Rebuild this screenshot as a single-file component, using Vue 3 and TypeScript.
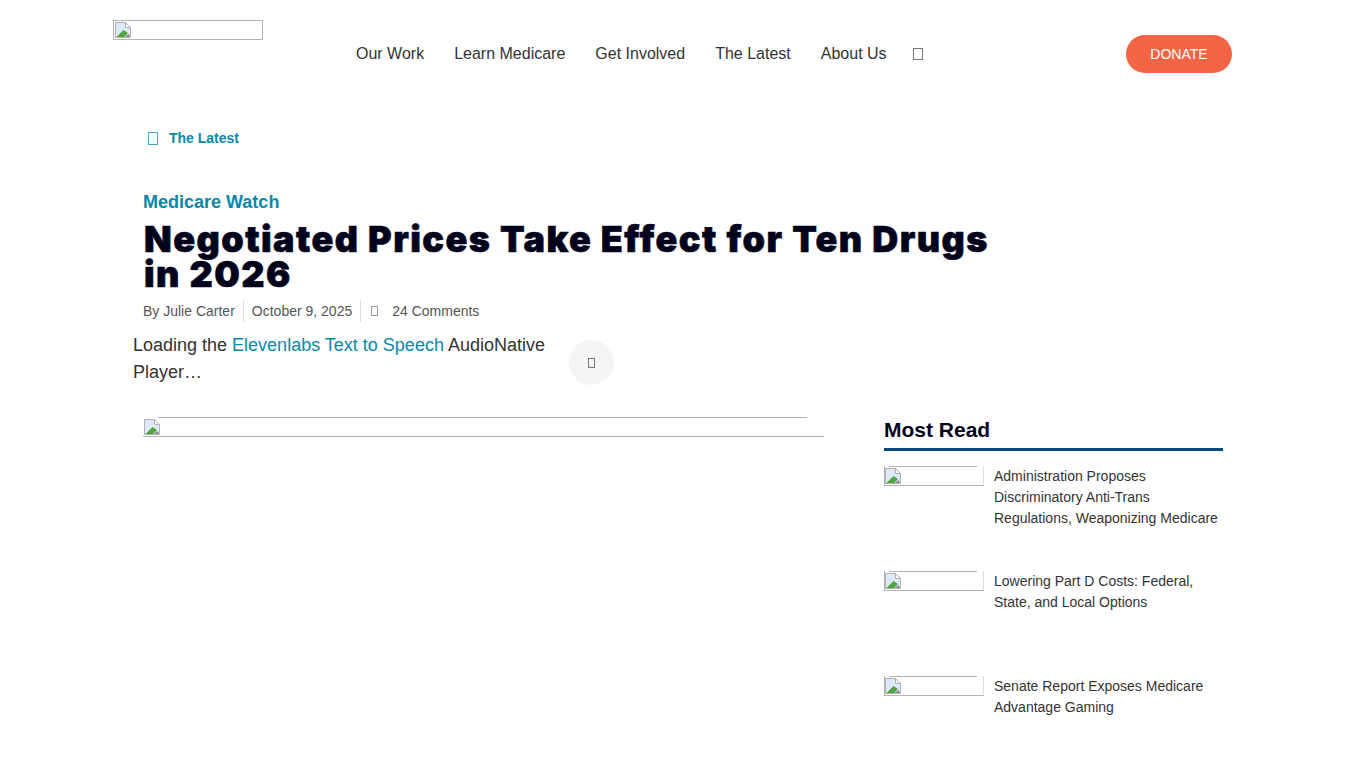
<script setup lang="ts">
const nav = ['Our Work', 'Learn Medicare', 'Get Involved', 'The Latest', 'About Us']
const posts = [
  'Administration Proposes Discriminatory Anti-Trans Regulations, Weaponizing Medicare',
  'Lowering Part D Costs: Federal, State, and Local Options',
  'Senate Report Exposes Medicare Advantage Gaming',
]
</script>

<template>
  <div class="page">
    <header class="header">
      <a class="broken logo" href="#" aria-label="Logo">
        <svg class="bi" viewBox="0 0 16 16"><path d="M.5.5h10l5 5v10H.5z" fill="#dde8f8" stroke="#b0b0b0"/><path d="M10.5.5v5h5z" fill="#fff" stroke="#b0b0b0"/><path d="M1.5 15l7-7 4.5 3-4 4z" fill="#4fa63d"/><path d="M9.500 15l4-3 1.500 3z" fill="#8a8a8a"/></svg>
      </a>
      <nav class="nav">
        <a v-for="n in nav" :key="n" href="#">{{ n }}</a>
        <span class="tofu nav-tofu"></span>
      </nav>
      <a class="donate" href="#">DONATE</a>
    </header>

    <div class="crumb"><span class="tofu crumb-tofu"></span><span>The Latest</span></div>

    <section class="title-block">
      <div class="kicker">Medicare Watch</div>
      <h1>Negotiated Prices Take Effect for Ten Drugs in 2026</h1>
      <div class="meta">
        <span>By Julie Carter</span>
        <span>October 9, 2025</span>
        <span class="comments"><i class="tofu meta-tofu"></i>24 Comments</span>
      </div>
    </section>

    <div class="audio">
      <p>Loading the <a href="#">Elevenlabs Text to Speech</a> AudioNative Player…</p>
      <button class="circle" type="button" aria-label="Play"><span class="tofu circle-tofu"></span></button>
    </div>

    <div class="columns">
      <div class="main-col">
        <div class="broken hero">
          <svg class="bi" viewBox="0 0 16 16"><path d="M.5.5h10l5 5v10H.5z" fill="#dde8f8" stroke="#b0b0b0"/><path d="M10.5.5v5h5z" fill="#fff" stroke="#b0b0b0"/><path d="M1.5 15l7-7 4.500 3-4 4z" fill="#4fa63d"/><path d="M9.500 15l4-3 1.500 3z" fill="#8a8a8a"/></svg>
        </div>
      </div>
      <aside class="side">
        <h2>Most Read</h2>
        <article v-for="p in posts" :key="p" class="post">
          <div class="broken thumb">
            <svg class="bi" viewBox="0 0 16 16"><path d="M.5.5h10l5 5v10H.5z" fill="#dde8f8" stroke="#b0b0b0"/><path d="M10.5.5v5h5z" fill="#fff" stroke="#b0b0b0"/><path d="M1.5 15l7-7 4.500 3-4 4z" fill="#4fa63d"/><path d="M9.500 15l4-3 1.500 3z" fill="#8a8a8a"/></svg>
          </div>
          <a href="#">{{ p }}</a>
        </article>
      </aside>
    </div>
  </div>
</template>

<style>
html, body { margin: 0; background: #fff; overflow: hidden; }
</style>

<style scoped>
.page {
  height: 768px;
  overflow: hidden;
  font-family: "Liberation Sans", Arial, sans-serif;
  color: #333;
  box-sizing: border-box;
  padding-top: 20px;
}
a { text-decoration: none; color: inherit; }
.header {
  display: flex;
  align-items: flex-start;
  padding-left: 113px;
  height: 90px;
}
.broken { box-sizing: border-box; position: relative; display: block; }
.bi { position: absolute; left: 1px; top: 1px; width: 16px; height: 16px; display: block; }
.logo { width: 150px; height: 20px; border: 1px solid #b3b3b3; flex: none; }
.nav {
  display: flex;
  align-items: center;
  gap: 30px;
  margin-left: 93px;
  margin-top: 23px;
  height: 21px;
  font-size: 16px;
  color: #333;
  white-space: nowrap;
}
.tofu {
  display: inline-block;
  box-sizing: border-box;
  border: 1px solid #777;
  flex: none;
}
.nav-tofu { width: 10px; height: 12px; margin-left: -4px; margin-top: 1px; }
.donate {
  margin-left: auto;
  margin-right: 134px;
  margin-top: 15px;
  width: 106px;
  height: 38px;
  border-radius: 19px;
  background: #f16545;
  color: #fff;
  font-size: 14px;
  display: flex;
  align-items: center;
  justify-content: center;
}
.crumb {
  display: flex;
  align-items: center;
  gap: 11px;
  margin-left: 148px;
  height: 16px;
  margin-top: 20px;
  font-size: 14px;
  font-weight: 700;
  color: #0b87a8;
}
.crumb-tofu { width: 10px; height: 13px; border-color: #4aa3bb; }
.title-block { margin-left: 143px; margin-top: 45px; width: 880px; }
.kicker { font-size: 18px; font-weight: 700; color: #0b87a8; line-height: 22px; }
h1 {
  margin: 9px 0 0 1px;
  font-family: Inter, "Liberation Sans", Arial, sans-serif;
  font-size: 36px;
  line-height: 35px;
  font-weight: 900;
  color: #03031c;
  letter-spacing: 1.45px;
  -webkit-text-stroke: 0.6px #03031c;
}
.meta { display: flex; margin-top: 8px; font-size: 14px; color: #555; height: 22px; align-items: center; }
.meta > span { padding: 0 8px; border-left: 1px solid #ddd; line-height: 22px; }
.meta > span:first-child { padding-left: 0; border-left: 0; }
.comments { display: flex; align-items: center; }
.meta-tofu { width: 7px; height: 10px; margin: 0 14px 0 2px; border-color: #999; }
.audio { display: flex; margin-left: 133px; margin-top: 10px; align-items: flex-start; }
.audio p { margin: 0; width: 420px; font-size: 18px; line-height: 27px; color: #333; }
.audio a { color: #0b87a8; }
.circle {
  margin: 8px 0 0 16px;
  width: 45px;
  height: 45px;
  border: 0;
  border-radius: 50%;
  background: #f3f5f7;
  color: #333;
  display: flex;
  align-items: center;
  justify-content: center;
  padding: 0;
}
.circle-tofu { width: 7px; height: 10px; }
.columns { display: flex; margin-left: 143px; margin-top: 31px; }
.main-col { width: 741px; flex: none; }
.hero {
  width: 681px;
  height: 20px;
  border-bottom: 1px solid #b3b3b3;
}
.hero::before {
  content: "";
  position: absolute;
  left: 15px;
  right: 17px;
  top: 0;
  border-top: 1px solid #b3b3b3;
}
.hero .bi { left: 1px; top: 2px; }
.side { width: 339px; margin-top: 0; }
h2 {
  margin: 0;
  font-size: 21px;
  line-height: 26px;
  font-weight: 700;
  color: #03031c;
  padding-bottom: 5px;
  border-bottom: 3px solid #004a7c;
}
.post {
  display: flex;
  gap: 10px;
  height: 105px;
  font-size: 14px;
  line-height: 21px;
  color: #333;
  margin-top: 15px;
}
.post + .post { margin-top: 0; }
.thumb {
  width: 100px;
  height: 20px;
  flex: none;
  border-bottom: 1px solid #b3b3b3;
  border-left: 1px solid #b3b3b3;
  border-right: 1px solid #ddd;
}
.thumb::before {
  content: "";
  position: absolute;
  left: 4px;
  right: 6px;
  top: 0;
  border-top: 1px solid #b3b3b3;
}
.thumb .bi { left: 0; top: 2px; }
.post a { display: block; margin-top: 0; }
</style>
